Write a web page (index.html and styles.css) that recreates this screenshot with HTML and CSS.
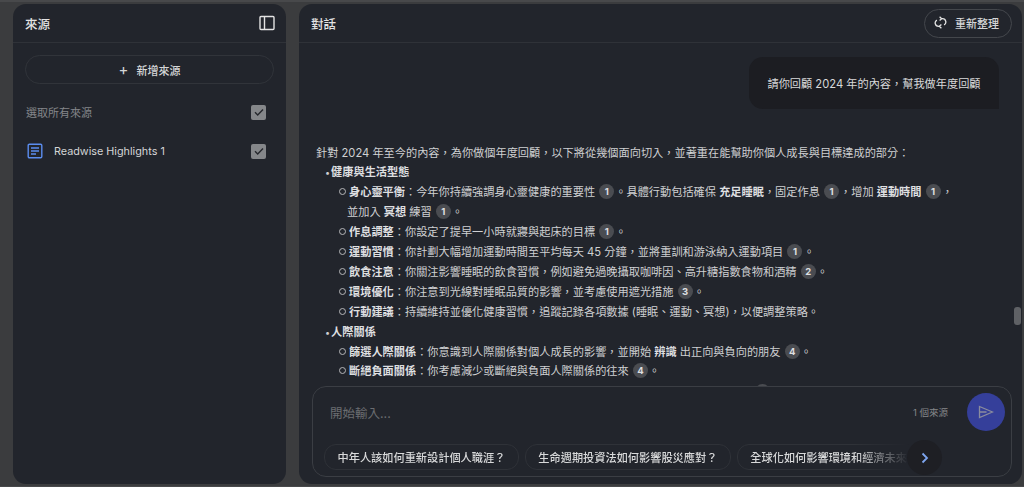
FILE: index.html
```html
<!DOCTYPE html>
<html lang="zh-Hant">
<head>
    <meta charset="UTF-8">
    <title>對話</title>
    <link rel="stylesheet" href="styles.css">
</head>
<body>
    <div class="app">
        <aside class="panel sources">
            <header class="panel-head">
                <h2>來源</h2>
                <svg class="collapse-icon" width="16" height="16" viewBox="0 0 16 16" fill="none" stroke="#e3e3e3" stroke-width="1.4">
                    <rect x="1" y="1.500" width="14" height="13" rx="1"/>
                    <path d="M5.500 1.500v13"/>
                </svg>
            </header>
            <div class="sources-body">
                <button class="add-source"><span class="plus">+</span>新增來源</button>
                <div class="source-row select-all">
                    <span>選取所有來源</span>
                    <span class="check"><svg width="14" height="14" viewBox="0 0 14 14" fill="none" stroke="#26282d" stroke-width="1.4"><path d="M3 7.300l2.700 2.700L11 4.500"/></svg></span>
                </div>
                <div class="source-row source-item">
                    <svg class="doc-icon" width="16" height="16" viewBox="0 0 16 16" fill="none" stroke="#5b8def" stroke-width="1.4">
                        <rect x="1.200" y="1.200" width="13.600" height="13.600" rx="1.200"/>
                        <path d="M4 5h8M4 8h8M4 11h5"/>
                    </svg>
                    <span class="source-name">Readwise Highlights 1</span>
                    <span class="check"><svg width="14" height="14" viewBox="0 0 14 14" fill="none" stroke="#26282d" stroke-width="1.4"><path d="M3 7.300l2.700 2.700L11 4.500"/></svg></span>
                </div>
            </div>
        </aside>

        <main class="panel chat">
            <header class="panel-head">
                <h2>對話</h2>
                <button class="refresh">
                    <svg width="13" height="14" viewBox="0 0 13 14" fill="none" stroke="#e3e3e3" stroke-width="1.300">
                        <path d="M8 2.700h.6a3.300 3.300 0 0 1 1.500 6.200"/>
                        <path d="M5 10.300h-.6a3.300 3.300 0 0 1-1.500-6.200"/>
                        <path d="M5.600 .8L7.700 2.700 5.600 4.600"/>
                        <path d="M7.400 8.400L5.300 10.300l2.100 1.900"/>
                    </svg>
                    重新整理
                </button>
            </header>
            <div class="chat-scroll">
                <div class="question">請你回顧 2024 年的內容，幫我做年度回顧</div>
                <div class="answer">
                    <p>針對 2024 年至今的內容，為你做個年度回顧，以下將從幾個面向切入，並著重在能幫助你個人成長與目標達成的部分：</p>
                    <ul>
                        <li><b>健康與生活型態</b>
                            <ul>
                                <li><b>身心靈平衡</b>：今年你持續強調身心靈健康的重要性 <i>1</i>。具體行動包括確保 <b>充足睡眠</b>，固定作息 <i>1</i>，增加 <b>運動時間</b> <i>1</i>，<br>並加入 <b>冥想</b> 練習 <i>1</i>。</li>
                                <li><b>作息調整</b>：你設定了提早一小時就寢與起床的目標 <i>1</i>。</li>
                                <li><b>運動習慣</b>：你計劃大幅增加運動時間至平均每天 45 分鐘，並將重訓和游泳納入運動項目 <i>1</i>。</li>
                                <li><b>飲食注意</b>：你關注影響睡眠的飲食習慣，例如避免過晚攝取咖啡因、高升糖指數食物和酒精 <i>2</i>。</li>
                                <li><b>環境優化</b>：你注意到光線對睡眠品質的影響，並考慮使用遮光措施 <i>3</i>。</li>
                                <li><b>行動建議</b>：持續維持並優化健康習慣，追蹤記錄各項數據 (睡眠、運動、冥想)，以便調整策略。</li>
                            </ul>
                        </li>
                        <li><b>人際關係</b>
                            <ul>
                                <li><b>篩選人際關係</b>：你意識到人際關係對個人成長的影響，並開始 <b>辨識</b> 出正向與負向的朋友 <i>4</i>。</li>
                                <li><b>斷絕負面關係</b>：你考慮減少或斷絕與負面人際關係的往來 <i>4</i>。</li>
                            </ul>
                        </li>
                    </ul>
                </div>
                <span class="badge-peek"></span>
                <span class="scroll-thumb"></span>
            </div>
            <div class="composer">
                <div class="composer-top">
                    <span class="placeholder">開始輸入...</span>
                    <span class="source-count">1 個來源</span>
                    <span class="send">
                        <svg width="16" height="14" viewBox="0 0 16 14" fill="none" stroke="#8a8c9e" stroke-width="1.300"><path d="M1.500 1.500L14.500 7 1.500 12.500zM1.500 7h7"/></svg>
                    </span>
                </div>
                <div class="suggestions">
                    <div class="chips">
                        <span class="chip">中年人該如何重新設計個人職涯？</span>
                        <span class="chip">生命週期投資法如何影響股災應對？</span>
                        <span class="chip">全球化如何影響環境和經濟未來？</span>
                    </div>
                    <span class="next"><svg width="8" height="12" viewBox="0 0 8 12" fill="none" stroke="#7ea6f0" stroke-width="1.800"><path d="M1.500 1.500L6 6l-4.500 4.500"/></svg></span>
                </div>
            </div>
        </main>
    </div>
</body>
</html>
```

FILE: styles.css
```css
* {
    box-sizing: border-box;
}
html, body {
    height: 100%;
}
body {
    margin: 0;
    background-color: #3b3c3e;
    font-family: Inter, "Noto Sans CJK TC", sans-serif;
    color: #e3e3e3;
    overflow: hidden;
}
.app {
    display: flex;
    gap: 13px;
    height: 487px;
    padding: 2px 2px 2px 13px;
    border-top: 2px solid #48494b;
    border-bottom: 1px solid #48494b;
}
.panel {
    background-color: #22252c;
    border-radius: 13px;
    display: flex;
    flex-direction: column;
    overflow: hidden;
}
.sources {
    width: 273px;
}
.chat {
    flex: 1;
    position: relative;
}
.panel-head {
    height: 39px;
    flex-shrink: 0;
    display: flex;
    align-items: center;
    justify-content: space-between;
    padding: 0 12px;
    border-bottom: 1px solid #2f3238;
}
.panel-head h2 {
    margin: 0;
    font-size: 12.500px;
    font-weight: 500;
}
.collapse-icon {
    margin-right: -1px;
}
.sources-body {
    padding: 12px 12px 0;
}
.add-source {
    width: 249px;
    height: 29px;
    display: flex;
    align-items: center;
    justify-content: center;
    background: none;
    border: 1px solid #31343a;
    border-radius: 15px;
    color: #d4d5d7;
    font-family: inherit;
    font-size: 11px;
    font-weight: 500;
}
.plus {
    font-size: 15px;
    font-weight: 400;
    margin-right: 8px;
}
.source-row {
    display: flex;
    align-items: center;
    font-size: 11px;
}
.select-all {
    height: 22px;
    margin-top: 17px;
    justify-content: space-between;
    color: #84868a;
    padding: 0 8px 0 1px;
}
.source-item {
    height: 22px;
    margin-top: 17px;
    padding-right: 8px;
    color: #d4d5d7;
}
.doc-icon {
    margin-left: 2px;
}
.source-name {
    flex: 1;
    margin-left: 11px;
    font-size: 10.800px;
}
.check {
    width: 15px;
    height: 15px;
    border-radius: 2px;
    background-color: #85878a;
    display: flex;
    align-items: center;
    justify-content: center;
}
.refresh {
    margin-right: -2px;
    width: 88px;
    height: 29px;
    padding: 0 12px 0 9px;
    display: flex;
    align-items: center;
    justify-content: center;
    gap: 8px;
    background: none;
    border: 1px solid #44474c;
    border-radius: 15px;
    color: #d4d5d7;
    font-family: inherit;
    font-size: 11px;
    font-weight: 500;
}
.chat-scroll {
    flex: 1;
    min-height: 0;
    overflow: hidden;
    position: relative;
}
.question {
    width: 250px;
    height: 52px;
    margin: 14px 0 0 450px;
    border-radius: 14px 14px 0 14px;
    background-color: #1c1d22;
    display: flex;
    align-items: center;
    justify-content: center;
    font-size: 11.200px;
    color: #d8d9da;
}
.answer {
    margin: 34.500px 0 0 17px;
    font-size: 11.200px;
    line-height: 19.900px;
    color: #cfd0d2;
}
.answer p {
    margin: 0;
}
.answer ul {
    margin: 0;
    padding: 0 0 0 14px;
    list-style: none;
}
.answer > ul {
    padding-left: 9px;
}
.answer > ul > li::before {
    content: "•";
    font-size: 9px;
    margin-right: 1px;
}
.answer ul ul li {
    padding-left: 8px;
    text-indent: -8px;
}
.answer ul ul li::before {
    content: "";
    display: inline-block;
    width: 5px;
    height: 5px;
    border: 1px solid #b5b6b8;
    border-radius: 50%;
    margin-right: 3px;
    vertical-align: 1px;
}
.answer b {
    font-weight: 700;
    color: #dedfe0;
}
.answer i {
    display: inline-block;
    width: 15px;
    height: 15px;
    border-radius: 50%;
    background-color: #4a4c51;
    color: #dedfe0;
    font-size: 9.500px;
    line-height: 15px;
    text-align: center;
    font-style: normal;
    font-weight: 700;
    text-indent: 0;
    vertical-align: 1px;
    margin: -3px 1px;
}
.badge-peek {
    position: absolute;
    left: 456px;
    top: 341px;
    width: 15px;
    height: 15px;
    border-radius: 50%;
    background-color: #4a4c51;
}
.scroll-thumb {
    position: absolute;
    right: 1px;
    top: 264px;
    width: 7px;
    height: 18px;
    border-radius: 3px;
    background-color: #5f6165;
}
.composer {
    position: absolute;
    left: 13px;
    top: 382px;
    width: 700px;
    height: 91px;
    background-color: #22252c;
    border: 1px solid #3b3e44;
    border-radius: 14px;
    padding: 6px 6px 0 11px;
}
.composer-top {
    display: flex;
    align-items: center;
    height: 38px;
}
.placeholder {
    flex: 1;
    padding-left: 6px;
    font-size: 12.500px;
    color: #6b6d71;
}
.source-count {
    font-size: 9.500px;
    color: #85878a;
    margin-right: 19px;
}
.send {
    width: 38px;
    height: 38px;
    border-radius: 50%;
    background-color: #353f9a;
    display: flex;
    align-items: center;
    justify-content: center;
}
.suggestions {
    margin-top: 13px;
    position: relative;
    width: 618px;
    height: 26px;
}
.chips {
    display: flex;
    gap: 6px;
    overflow: hidden;
    height: 26px;
    -webkit-mask-image: linear-gradient(to right, #000 530px, transparent 585px);
    mask-image: linear-gradient(to right, #000 530px, transparent 585px);
}
.chip {
    flex-shrink: 0;
    height: 26px;
    padding: 0 12.500px;
    display: flex;
    align-items: center;
    border: 1px solid #2f3238;
    border-radius: 12px;
    font-size: 11.200px;
    font-weight: 500;
    color: #d8d9da;
}
.next {
    position: absolute;
    left: 583px;
    top: -4px;
    width: 35px;
    height: 35px;
    border-radius: 50%;
    background-color: #1e1f24;
    display: flex;
    align-items: center;
    justify-content: center;
}
```
